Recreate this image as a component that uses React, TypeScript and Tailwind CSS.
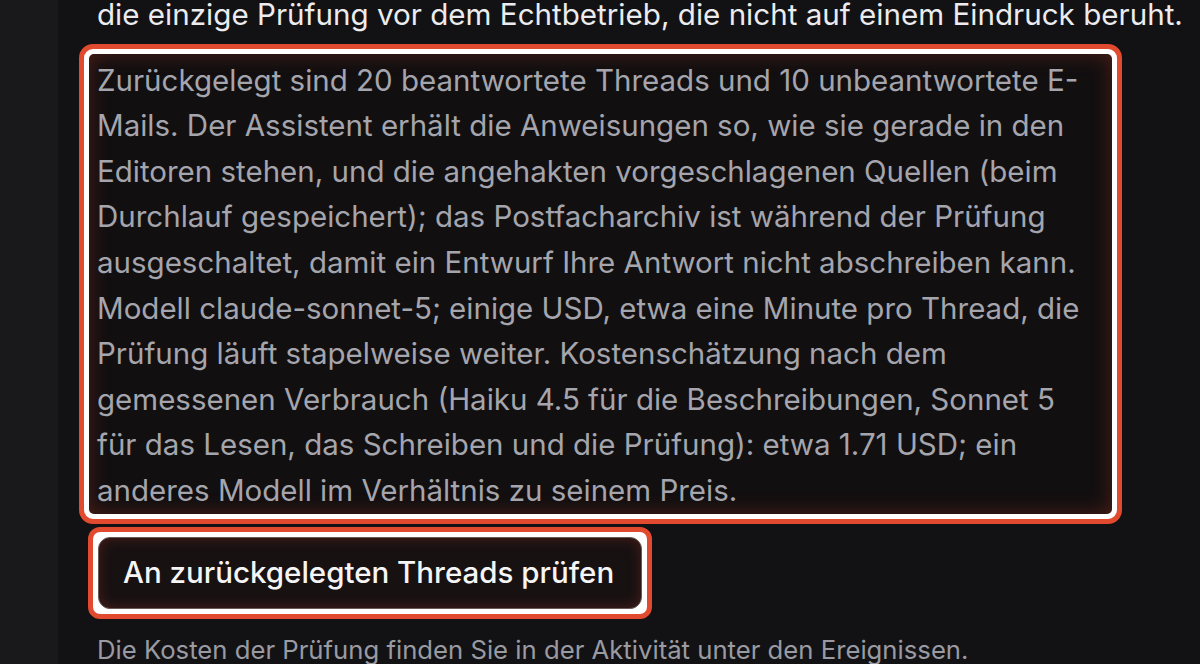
const font = "font-['Inter','Liberation_Sans',sans-serif]";

function HighlightRing({
  children,
  outerRadius,
  innerRadius,
}: {
  children: React.ReactNode;
  outerRadius: string;
  innerRadius: string;
}) {
  return (
    <div className={`border-[5px] border-[#e14a2e] bg-[#e14a2e] ${outerRadius}`}>
      <div className={`border-[5px] border-white bg-white ${innerRadius}`}>
        {children}
      </div>
    </div>
  );
}

export default function App() {
  return (
    <div className={`flex h-[664px] w-[1200px] overflow-hidden bg-[#121214] ${font}`}>
      {/* sidebar edge */}
      <aside className="w-[58px] shrink-0 bg-[#19191c]" />

      <main className="flex flex-1 flex-col pl-[21px] -mt-[8px]">
        <p className="pl-[18px] text-[29.6px] leading-[45.6px] text-[#ececef] whitespace-nowrap">
          die einzige Prüfung vor dem Echtbetrieb, die nicht auf einem Eindruck beruht.
        </p>

        {/* dry-run summary */}
        <div className="mt-[6px] w-[1043px]">
          <HighlightRing outerRadius="rounded-[14px]" innerRadius="rounded-[9px]">
            <div className="rounded-[5px] bg-[#120f10] pl-[8px] pr-[22px] pt-[4px] shadow-[inset_0_0_20px_rgba(190,60,40,0.35)]">
              <p className="text-[29.5px] leading-[45.6px] text-[#a5a5ad]">
                Zurückgelegt sind 20 beantwortete Threads und 10 unbeantwortete E-Mails. Der
                Assistent erhält die Anweisungen so, wie sie gerade in den Editoren stehen, und die
                angehakten vorgeschlagenen Quellen (beim Durchlauf gespeichert); das Postfacharchiv
                ist während der Prüfung ausgeschaltet, damit ein Entwurf Ihre Antwort nicht
                abschreiben kann. Modell claude-sonnet-5; einige USD, etwa eine Minute pro Thread,
                die Prüfung läuft stapelweise weiter. Kostenschätzung nach dem gemessenen Verbrauch
                (Haiku 4.5 für die Beschreibungen, Sonnet 5 für das Lesen, das Schreiben und die
                Prüfung): etwa 1.71 USD; ein anderes Modell im Verhältnis zu seinem Preis.
              </p>
            </div>
          </HighlightRing>
        </div>

        {/* run button */}
        <div className="ml-[9px] mt-[3px] self-start">
          <HighlightRing outerRadius="rounded-[12px]" innerRadius="rounded-[7px]">
            <button className="flex h-[72px] w-[544px] items-center rounded-[12px] border border-[#6a5855] bg-[#171112] px-[24px] text-[29.5px] font-medium text-[#f5f5f6] shadow-[inset_0_0_14px_rgba(190,60,40,0.3)]">
              An zurückgelegten Threads prüfen
            </button>
          </HighlightRing>
        </div>

        <p className="mt-[12px] pl-[18px] text-[25.7px] leading-[38.7px] text-[#9a9aa2] whitespace-nowrap">
          Die Kosten der Prüfung finden Sie in der Aktivität unter den Ereignissen.
        </p>
      </main>
    </div>
  );
}
